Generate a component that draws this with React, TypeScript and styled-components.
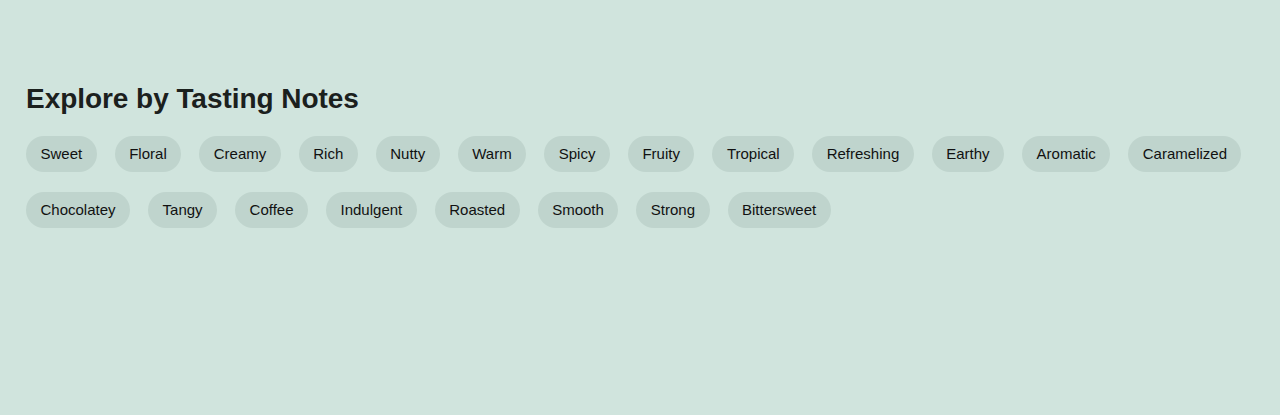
import React from "react";
import styled, { createGlobalStyle } from "styled-components";

const Global = createGlobalStyle`
  html, body { margin: 0; padding: 0; background: #d0e4dd; }
  body { font-family: "Liberation Sans", Arial, sans-serif; }
`;

const Page = styled.main`
  min-height: 415px;
  box-sizing: border-box;
  padding: 83px 26px 0;
  background: #d0e4dd;
`;

const Heading = styled.h2`
  margin: 0 0 21px;
  font-size: 28px;
  line-height: normal;
  font-weight: 700;
  letter-spacing: -0.05px;
  color: #1b201d;
`;

const ChipList = styled.div`
  display: flex;
  flex-wrap: wrap;
  gap: 20px 18px;
  max-width: 1228px;
`;

const Chip = styled.button`
  height: 36px;
  padding: 0 14.5px;
  border: none;
  border-radius: 18px;
  background: #bfd4cd;
  color: #111;
  font-family: "Liberation Sans", Arial, sans-serif;
  font-size: 15px;
  line-height: 36px;
  cursor: pointer;
`;

const notes = [
  "Sweet", "Floral", "Creamy", "Rich", "Nutty", "Warm", "Spicy", "Fruity",
  "Tropical", "Refreshing", "Earthy", "Aromatic", "Caramelized", "Chocolatey",
  "Tangy", "Coffee", "Indulgent", "Roasted", "Smooth", "Strong", "Bittersweet",
];

export default function App() {
  return (
    <>
      <Global />
      <Page>
        <Heading>Explore by Tasting Notes</Heading>
        <ChipList>
          {notes.map((n) => (
            <Chip key={n}>{n}</Chip>
          ))}
        </ChipList>
      </Page>
    </>
  );
}
